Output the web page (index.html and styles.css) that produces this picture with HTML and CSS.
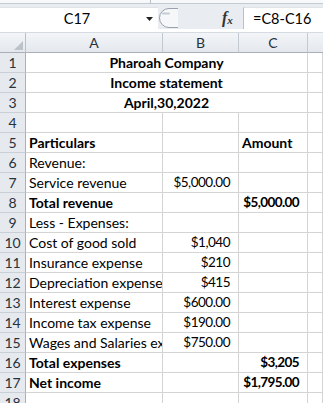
FILE: index.html
```html
<!DOCTYPE html>
<html>
<head>
<meta charset="utf-8">
<link rel="stylesheet" href="styles.css">
</head>
<body>
<div class="app">
  <div class="ribbon-edge"><span class="tick"></span></div>
  <div class="fbar">
    <div class="namebox">
      <span class="name">C17</span>
      <svg class="caret" width="7" height="4" viewBox="0 0 7 4"><path d="M0 0H7L3.5 4Z" fill="#222"/></svg>
    </div>
    <svg class="knob" width="20" height="22" viewBox="0 0 20 22">
      <path d="M19 1.5H10A9.5 9.5 0 0 0 10 20.5H19" fill="#f6f7f9" stroke="#9aa3ad" stroke-width="1"/>
      <path d="M4 6.5H10" stroke="#c5cbd2" stroke-width="2" stroke-linecap="round"/>
    </svg>
    <div class="spacer"></div>
    <div class="fx"><i>f</i><span>x</span></div>
    <div class="formula">=C8-C16</div>
  </div>
  <div class="sheet">
    <div class="row head">
      <div class="corner"><svg width="9" height="9" viewBox="0 0 9 9"><path d="M9 0V9H0Z" fill="#bcc2ca"/></svg></div>
      <div class="ch">A</div><div class="ch">B</div><div class="ch">C</div><div class="ch last"></div>
    </div>
    <div class="row"><div class="rh">1</div><div class="c merged b">Pharoah Company</div><div class="c"></div></div>
    <div class="row"><div class="rh">2</div><div class="c merged b">Income statement</div><div class="c"></div></div>
    <div class="row"><div class="rh">3</div><div class="c merged b">April,30,2022</div><div class="c"></div></div>
    <div class="row"><div class="rh">4</div><div class="c"></div><div class="c"></div><div class="c"></div><div class="c"></div></div>
    <div class="row"><div class="rh">5</div><div class="c b">Particulars</div><div class="c"></div><div class="c b">Amount</div><div class="c"></div></div>
    <div class="row"><div class="rh">6</div><div class="c">Revenue:</div><div class="c"></div><div class="c"></div><div class="c"></div></div>
    <div class="row"><div class="rh">7</div><div class="c">Service revenue</div><div class="c n">$5,000.00</div><div class="c"></div><div class="c"></div></div>
    <div class="row"><div class="rh">8</div><div class="c b">Total revenue</div><div class="c"></div><div class="c n b">$5,000.00</div><div class="c"></div></div>
    <div class="row"><div class="rh">9</div><div class="c">Less - Expenses:</div><div class="c"></div><div class="c"></div><div class="c"></div></div>
    <div class="row"><div class="rh">10</div><div class="c">Cost of good sold</div><div class="c n">$1,040</div><div class="c"></div><div class="c"></div></div>
    <div class="row"><div class="rh">11</div><div class="c">Insurance expense</div><div class="c n">$210</div><div class="c"></div><div class="c"></div></div>
    <div class="row"><div class="rh">12</div><div class="c">Depreciation expense</div><div class="c n">$415</div><div class="c"></div><div class="c"></div></div>
    <div class="row"><div class="rh">13</div><div class="c">Interest expense</div><div class="c n">$600.00</div><div class="c"></div><div class="c"></div></div>
    <div class="row"><div class="rh">14</div><div class="c">Income tax expense</div><div class="c n">$190.00</div><div class="c"></div><div class="c"></div></div>
    <div class="row"><div class="rh">15</div><div class="c">Wages and Salaries expense</div><div class="c n">$750.00</div><div class="c"></div><div class="c"></div></div>
    <div class="row"><div class="rh">16</div><div class="c b">Total expenses</div><div class="c"></div><div class="c n b">$3,205</div><div class="c"></div></div>
    <div class="row"><div class="rh">17</div><div class="c b">Net income</div><div class="c"></div><div class="c n b">$1,795.00</div><div class="c"></div></div>
    <div class="row"><div class="rh">18</div><div class="c"></div><div class="c"></div><div class="c"></div><div class="c"></div></div>
  </div>
</div>
</body>
</html>
```
FILE: styles.css
```css
* { box-sizing: border-box; }
html, body { margin: 0; padding: 0; background: #fff; }
body {
  width: 323px;
  height: 403px;
  overflow: hidden;
  font-family: Lato, "Liberation Sans", sans-serif;
  font-size: 14px;
  color: #000;
}
.app { width: 323px; }

.ribbon-edge {
  height: 7px;
  background: #e9ecf0;
  border-top: 3px solid #f7f8fa;
  position: relative;
}
.ribbon-edge::before {
  content: "";
  display: block;
  height: 1px;
  background: #c4cad2;
}
.tick {
  position: absolute;
  left: 150px;
  top: -3px;
  width: 1px;
  height: 4px;
  background: #b8bfc8;
}

.fbar {
  display: flex;
  height: 22px;
  background: #e9ecf0;
}
.namebox {
  width: 158px;
  background: #fff;
  border-top: 1px solid #dfe3e8;
  display: flex;
  align-items: center;
  position: relative;
}
.name {
  flex: 1;
  text-align: center;
  font-size: 14.5px;
  padding-left: 8px;
}
.caret { margin-right: 5px; }
.knob { display: block; margin-left: 1px; }
.spacer { flex: 1; }
.fx {
  width: 20px;
  display: flex;
  align-items: center;
  font-family: "Liberation Serif", serif;
  font-size: 16px;
  color: #333;
  padding-left: 4px;
  margin-right: 5px;
}
.fx i { font-weight: bold; }
.fx span { font-style: italic; font-size: 11px; font-weight: bold; margin-top: 4px; }
.formula {
  width: 80px;
  background: #fff;
  border-left: 1px solid #b9c0c8;
  border-top: 1px solid #dfe3e8;
  display: flex;
  align-items: center;
  padding-left: 9px;
  font-size: 14.5px;
}

.sheet { margin-top: 3px; }
.row {
  display: grid;
  grid-template-columns: 26px 137px 76px 69px 1fr;
  height: 20px;
}
.row.head { height: 21px; background: linear-gradient(#f3f5f8, #e3e7ec); border-top: 1px solid #d6dbe1; }
.corner {
  border-right: 1px solid #b9c0c8;
  border-bottom: 1px solid #a9b0b9;
  display: flex;
  align-items: flex-end;
  justify-content: flex-end;
  padding: 0 2px 2px 0;
}
.ch {
  border-right: 1px solid #c3c9d0;
  border-bottom: 1px solid #a9b0b9;
  display: flex;
  align-items: center;
  justify-content: center;
  color: #27323d;
  font-size: 14px;
}
.ch.last { border-right: none; }
.rh {
  background: #e6e9ee;
  border-right: 1px solid #a9b0b9;
  border-bottom: 1px solid #c9cfd6;
  display: flex;
  align-items: flex-end;
  justify-content: center;
  color: #27323d;
  padding-bottom: 1px;
  line-height: 17px;
}
.c {
  border-right: 1px solid #d4d4d4;
  border-bottom: 1px solid #d4d4d4;
  display: flex;
  align-items: flex-end;
  padding: 0 0 1px 3px;
  white-space: nowrap;
  overflow: hidden;
  line-height: 17px;
}
.c.b { font-weight: bold; }
.c.n {
  justify-content: flex-end;
  padding-right: 8px;
  padding-left: 0;
  font-size: 13.5px;
  letter-spacing: -0.5px;
}
.c.n.b { letter-spacing: -0.6px; }
.c.merged { grid-column: span 3; justify-content: center; padding-left: 0; }
```
